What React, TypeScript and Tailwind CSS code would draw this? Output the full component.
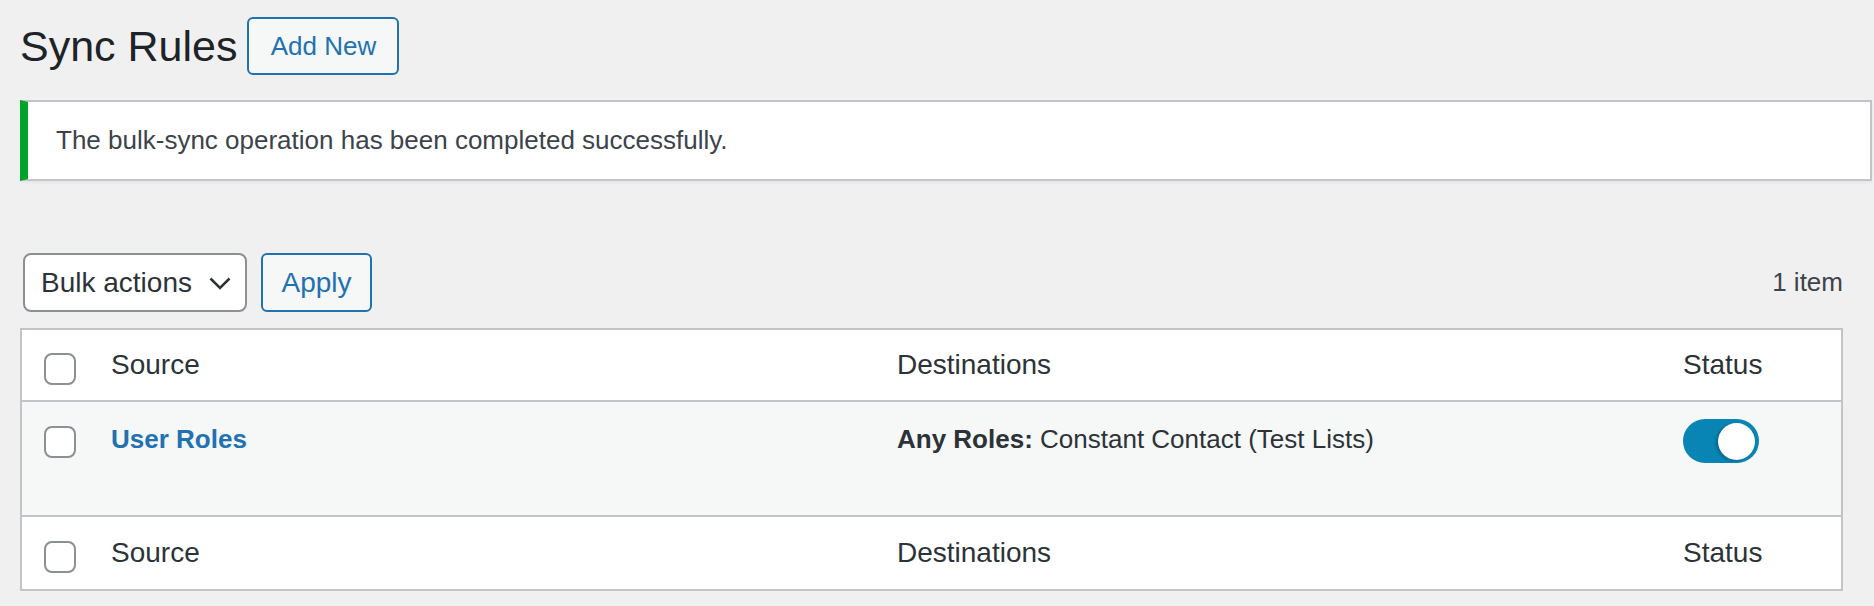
// App.tsx — Sync Rules list screen (WP admin style)

const cols = "grid grid-cols-[89px_1fr_1fr_158px]"

function Checkbox({ className = "" }: { className?: string }) {
  return <span className={`block size-[32px] rounded-[8px] border-2 border-[#8c8f94] bg-white ${className}`} />
}

function Toggle() {
  return (
    <span className="flex h-[44px] w-[76px] items-center justify-end rounded-full bg-[#0885b5] pr-[4px]">
      <span className="block size-[37px] rounded-full bg-white shadow-[-2px_1px_3px_rgba(0,0,0,0.25)]" />
    </span>
  )
}

function HeadRow({ border }: { border: "top" | "bottom" }) {
  return (
    <div
      className={`${cols} h-[72px] items-center bg-white text-[28px] text-[#2c3338] ${
        border === "bottom" ? "border-b-2 border-[#c3c4c7]" : ""
      }`}
    >
      <div className="pl-[22px]">
        <Checkbox className="mt-[7px]" />
      </div>
      <div>Source</div>
      <div>Destinations</div>
      <div>Status</div>
    </div>
  )
}

export default function App() {
  return (
    <div className="min-h-screen bg-[#f0f0f1] pl-[20px] pr-[2px] pt-[17px] font-['Liberation_Sans',Arial,sans-serif]">
      {/* 标题栏 */}
      <div className="flex items-center gap-[10px]">
        <h1 className="text-[43px] leading-[58px] font-normal text-[#1d2327]">Sync Rules</h1>
        <button className="h-[58px] w-[152px] rounded-[6px] border-2 border-[#2271b1] bg-[#f6f7f7] text-[26px] text-[#2271b1]">
          Add New
        </button>
      </div>

      {/* 提示 */}
      <div className="mt-[25px] flex h-[81px] items-center border-2 border-l-[8px] border-[#c3c4c7] border-l-[#00a32a] bg-white pl-[28px] shadow-[0_2px_2px_rgba(0,0,0,0.04)]">
        <p className="text-[26px] text-[#3c434a]">The bulk-sync operation has been completed successfully.</p>
      </div>

      <div className="pr-[29px]">
        {/* 批量操作 */}
        <div className="mt-[72px] flex h-[59px] items-center justify-between">
          <div className="flex gap-[14px] pl-[3px]">
            <div className="flex h-[59px] w-[224px] items-center justify-between rounded-[8px] border-2 border-[#8c8f94] bg-white pl-[16px] pr-[14px] text-[28px] text-[#2c3338]">
              <span>Bulk actions</span>
              <svg width="22" height="13" viewBox="0 0 22 13" fill="none" stroke="#2c3338" strokeWidth="2.5" className="mt-[2px]">
                <path d="M1.5 1.5 L11 11 L20.5 1.5" />
              </svg>
            </div>
            <button className="h-[59px] w-[111px] rounded-[6px] border-2 border-[#2271b1] bg-[#f6f7f7] text-[28px] text-[#2271b1]">
              Apply
            </button>
          </div>
          <span className="text-[26px] text-[#3c434a]">1 item</span>
        </div>

        {/* 表格 */}
        <div className="mt-[16px] border-2 border-[#c3c4c7] bg-white">
          <HeadRow border="bottom" />
          <div className={`${cols} h-[115px] items-start border-b-2 border-[#c3c4c7] bg-[#f6f7f7] pt-[17px] text-[26px] leading-[39px] text-[#2c3338]`}>
            <div className="pl-[22px]">
              <Checkbox className="mt-[7px]" />
            </div>
            <div className="mt-[1px]">
              <a className="font-bold text-[#2271b1]">User Roles</a>
            </div>
            <div className="mt-[1px]">
              <b className="font-bold">Any Roles:</b> Constant Contact (Test Lists)
            </div>
            <div>
              <Toggle />
            </div>
          </div>
          <HeadRow border="top" />
        </div>
      </div>
    </div>
  )
}
